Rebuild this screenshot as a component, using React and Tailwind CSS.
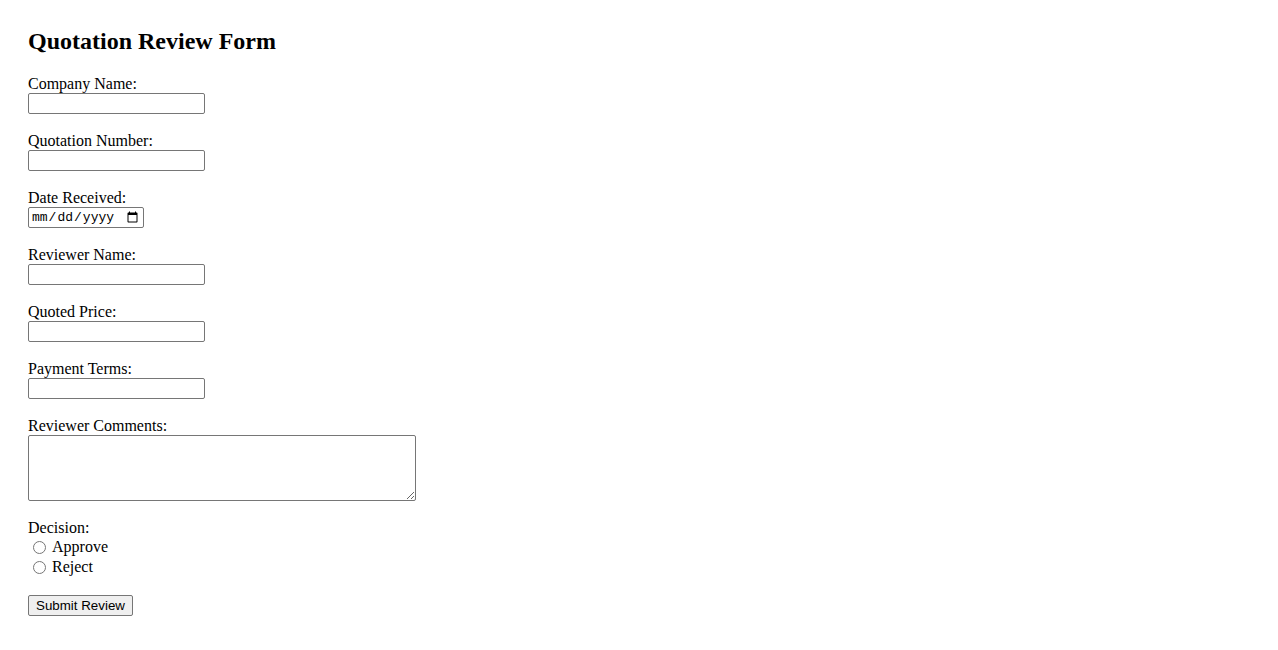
import { useState } from 'react';

const fields = [
  { id: 'company', label: 'Company Name:', type: 'text' },
  { id: 'quotation', label: 'Quotation Number:', type: 'text' },
  { id: 'date', label: 'Date Received:', type: 'date' },
  { id: 'reviewer', label: 'Reviewer Name:', type: 'text' },
  { id: 'price', label: 'Quoted Price:', type: 'text' },
  { id: 'terms', label: 'Payment Terms:', type: 'text' },
];

export default function App() {
  const [decision, setDecision] = useState('');

  return (
    <div className="min-h-screen bg-white px-[28px] pt-[7px] text-black font-['Liberation_Serif',serif] text-[16px]">
      <h2 className="mt-[20px] mb-[20px] text-[24px] leading-[28px] font-bold">Quotation Review Form</h2>

      <form onSubmit={(e) => e.preventDefault()} className="flex flex-col items-start">
        {fields.map((f) => (
          <div key={f.id} className="flex flex-col items-start mb-[18px]">
            <label htmlFor={f.id} className="block h-[18px] leading-[18px]">{f.label}</label>
            {f.type === 'date' ? (
              <input
                id={f.id}
                type="date"
                className="block w-[116px] h-[21px] px-[2px] border border-[#767676] rounded-[2px] bg-white font-['Liberation_Mono',monospace] text-[13px] leading-[17px]"
              />
            ) : (
              <input
                id={f.id}
                type="text"
                className="block w-[177px] h-[21px] px-[2px] border border-[#767676] rounded-[2px] bg-white font-['Liberation_Sans',sans-serif] text-[13px]"
              />
            )}
          </div>
        ))}

        <div className="flex flex-col items-start mb-[18px]">
          <label htmlFor="comments" className="block h-[18px] leading-[18px]">Reviewer Comments:</label>
          <textarea
            id="comments"
            className="block w-[388px] h-[66px] px-[2px] border border-[#767676] rounded-[2px] bg-white font-['Liberation_Mono',monospace] text-[13px]"
          />
        </div>

        <div className="flex flex-col items-start mb-[18px]">
          <span className="block h-[18px] leading-[18px]">Decision:</span>
          {['Approve', 'Reject'].map((d) => (
            <label key={d} className="flex items-center h-[20px] leading-[20px]">
              <input
                type="radio"
                name="decision"
                value={d}
                checked={decision === d}
                onChange={() => setDecision(d)}
                className="w-[13px] h-[13px] ml-[5px] mr-[6px]"
              />
              {d}
            </label>
          ))}
        </div>

        <button
          type="submit"
          className="w-[105px] h-[21px] px-[6px] border border-[#767676] rounded-[2px] bg-[#efefef] font-['Liberation_Sans',sans-serif] text-[13.33px] leading-[17px]"
        >
          Submit Review
        </button>
      </form>
    </div>
  );
}
